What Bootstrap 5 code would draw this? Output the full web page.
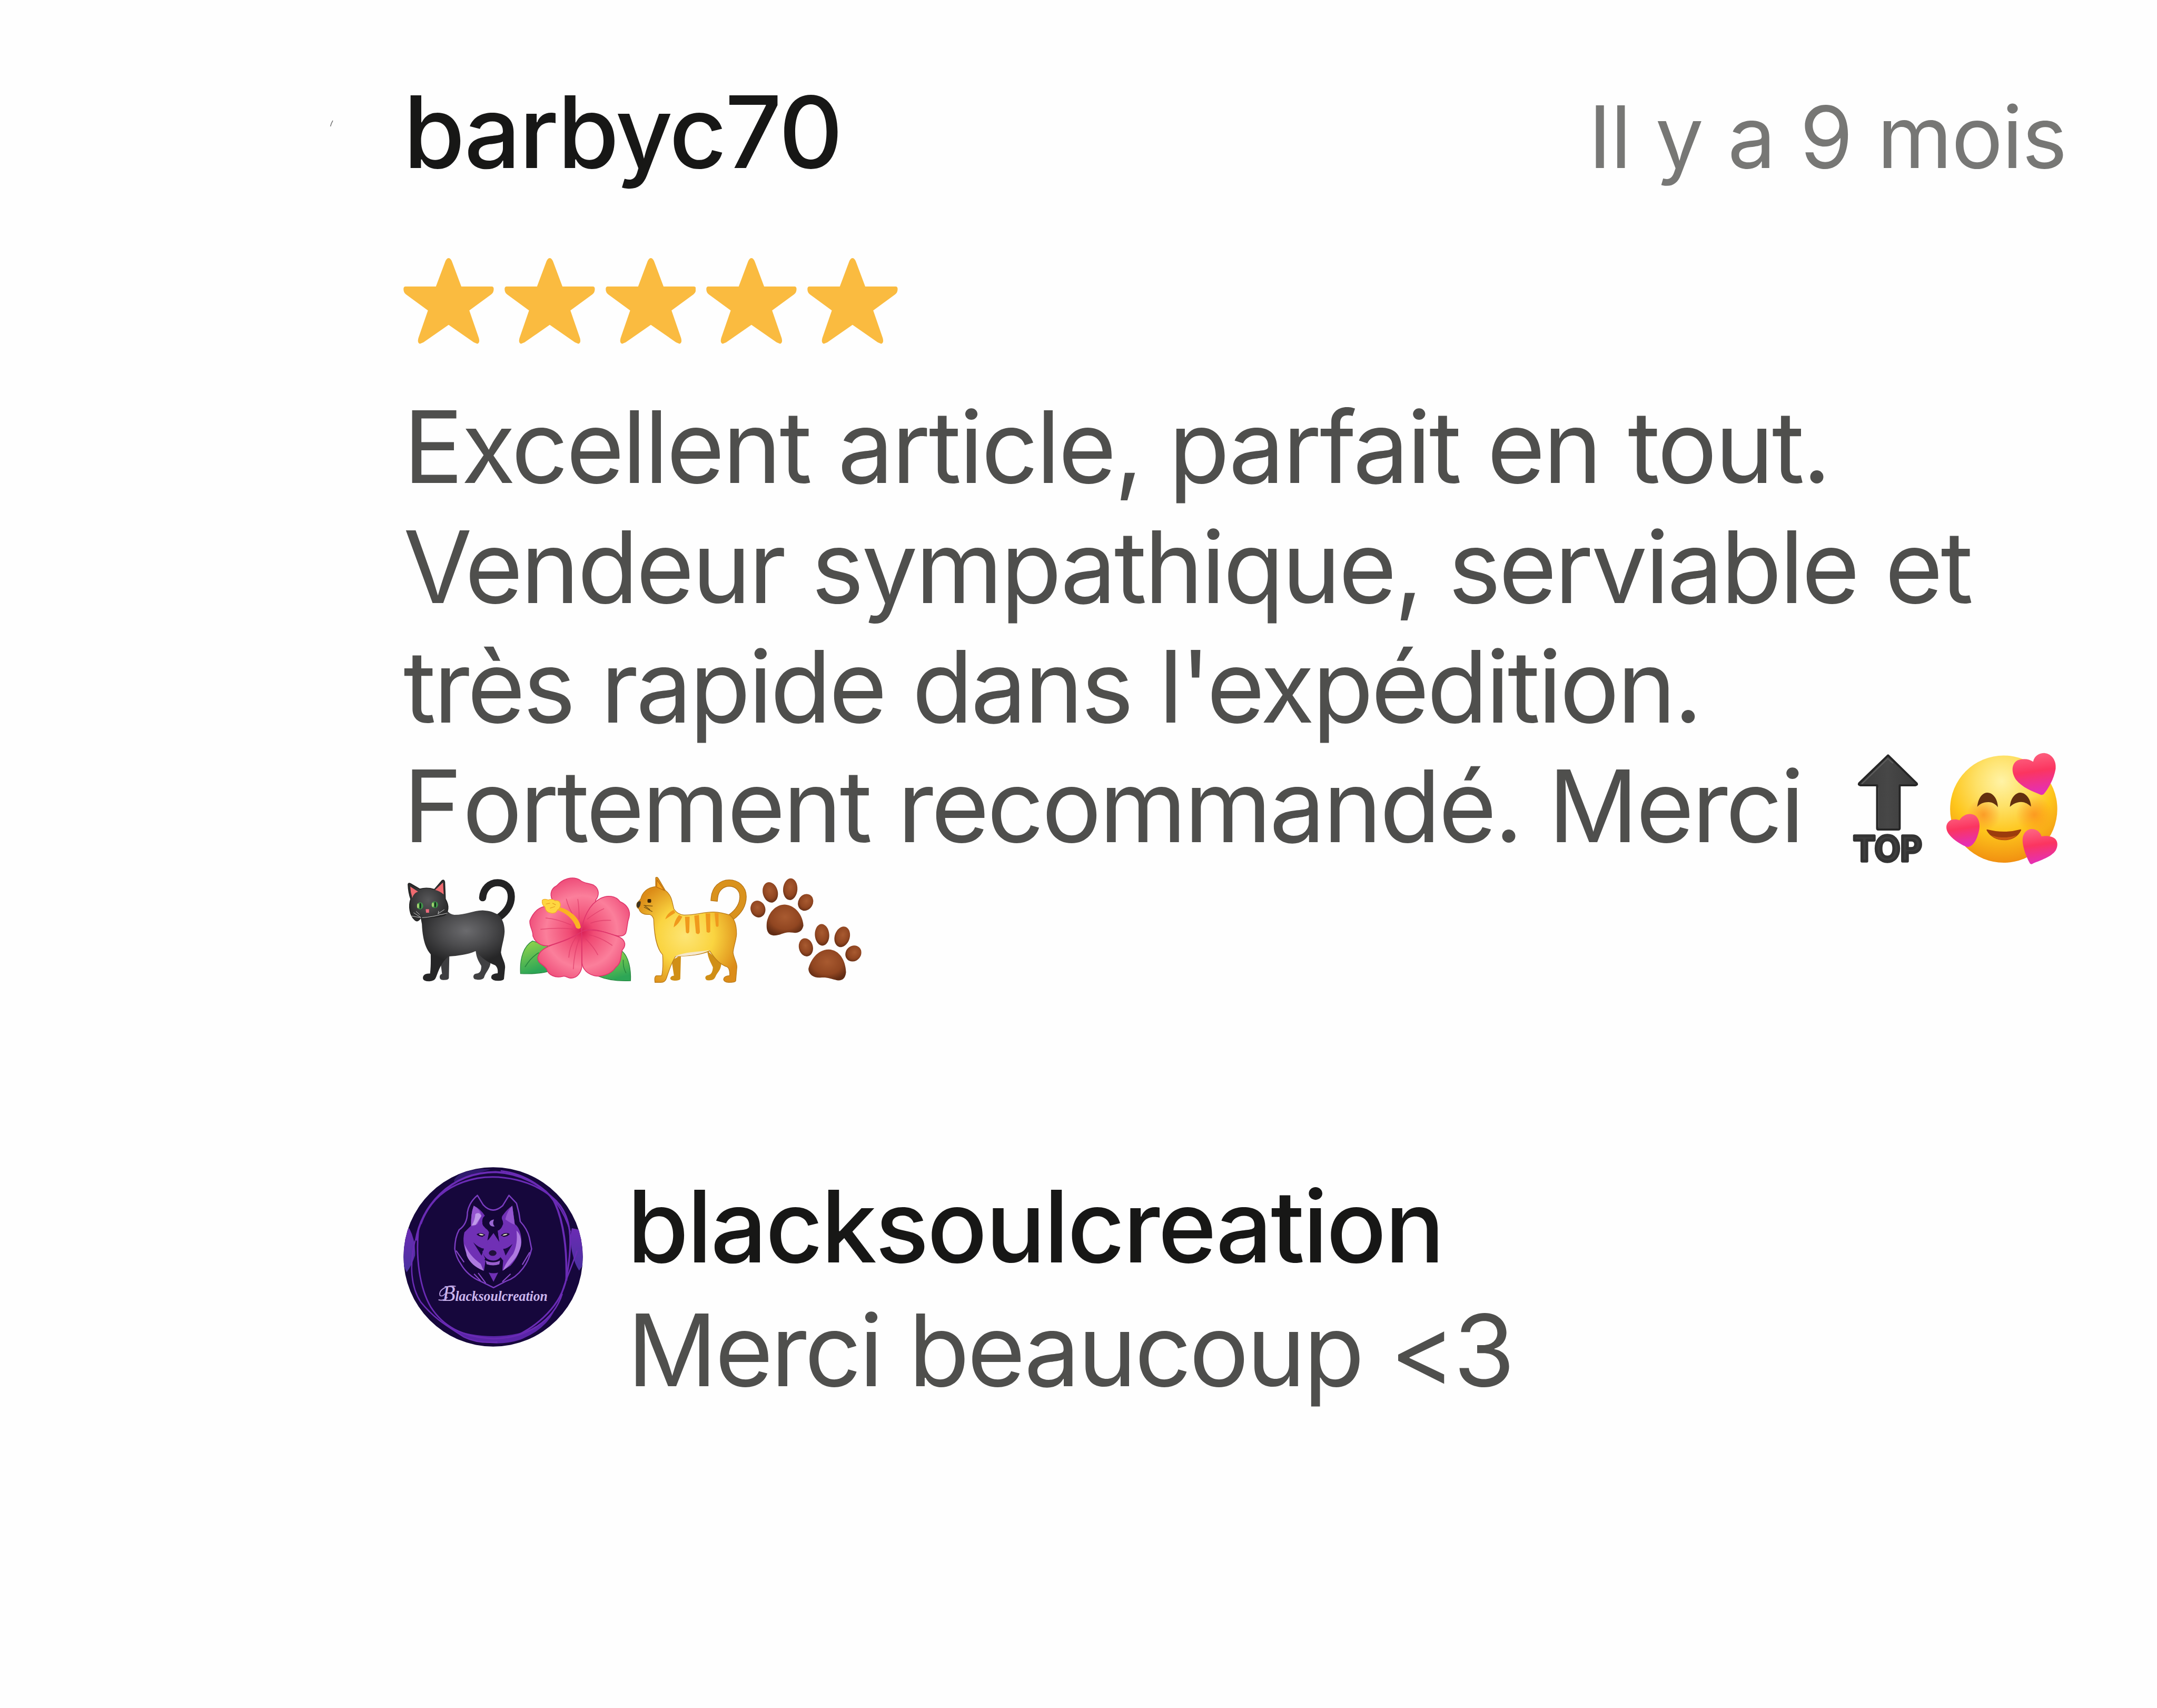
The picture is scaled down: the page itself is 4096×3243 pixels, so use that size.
<!DOCTYPE html>
<html lang="fr">
<head>
  <meta charset="UTF-8" />
  <meta name="viewport" content="width=device-width, initial-scale=1.0" />
  <title>Avis</title>
  <link href="https://cdn.jsdelivr.net/npm/bootstrap@5.3.0/dist/css/bootstrap.min.css" rel="stylesheet" />
  <style>
    body {
      background-color: #fefefe;
      font-family: Inter, "Liberation Sans", sans-serif;
      font-size: 189.2px;
      line-height: 227.4px;
      color: #4f4f4d;
      letter-spacing: -.0222em;
      word-spacing: 3px;
    }
    .review { padding: 137px 172px 0 766px; }
    .user-name { color: #171716; font-weight: 500; letter-spacing: -.017em; }
    .review-date { color: #777775; font-size: 163px; letter-spacing: -.010em; }
    .stars { gap: 20px; margin-top: 117px; margin-bottom: 82px; }
    .stars svg { width: 171.8px; height: 162.8px; }
    .track-open { letter-spacing: -.0202em; }
    .track-tight { letter-spacing: -.0228em; }
    .cap-open { letter-spacing: .003em; }
    .emoji { width: 218.1px; height: 227.4px; flex: none; overflow: visible; }
    .after-text { margin-left: 53px; }
    .emoji-line { padding-left: 1px; }
    .reply { margin-top: 340px; line-height: 234.9px; gap: 84px; }
    .avatar { width: 341px; height: 341px; margin-top: 4px; flex: none; }
    .speck { left: 626px; top: 228px; width: 7px; height: 13px; }
  </style>
</head>
<body>

<svg class="position-absolute speck" viewBox="0 0 7 13"><path d="M1.500 12Q3 6 6 1" stroke="#777" stroke-width="1.500" fill="none" /></svg>

<div class="review">
  <div class="d-flex justify-content-between align-items-baseline">
    <div class="user-name">barbyc70</div>
    <div class="review-date">Il y a 9 mois</div>
  </div>

  <!-- Rating -->
  <div class="d-flex stars" id="stars"></div>

  <!-- Comment -->
  <div class="text-nowrap">
    <div class="track-open">Excellent article, parfait en tout.</div>
    <div>Vendeur sympathique, serviable et</div>
    <div class="track-tight">très rapide dans l'expédition.</div>
    <div class="d-flex">
      <span><span class="cap-open">F</span>ortement recommandé. Merci</span>
      <svg class="emoji after-text" viewBox="-77 14 690 719">
        <defs>
          <linearGradient id="topFill" x1="0" y1="0" x2="1" y2="0">
            <stop offset="0" stop-color="#3c3c3c" /><stop offset=".5" stop-color="#474747" /><stop offset="1" stop-color="#3a3a3a" />
          </linearGradient>
        </defs>
        <path d="M272 68L444 236Q450 246 436 248H342V506Q342 514 334 514H212Q206 514 206 506V248H106Q92 246 98 236Z" fill="url(#topFill)" stroke="#262626" stroke-width="12" stroke-linejoin="round" />
        <path d="M116 238L270 88L300 114" fill="none" stroke="#5d5d5d" stroke-width="7" stroke-linecap="round" />
        <path d="M215 262V498" stroke="#555" stroke-width="4" />
        <text x="62" y="703" textLength="414" lengthAdjust="spacingAndGlyphs" font-family="Inter" font-weight="700" font-size="210" letter-spacing="0" fill="#3d3d3d" stroke="#333" stroke-width="17" stroke-linejoin="round">TOP</text>
      </svg>
      <svg class="emoji" viewBox="612 14 690 719">
        <defs>
          <radialGradient id="faceFill" cx=".48" cy=".24" r=".78">
            <stop offset="0" stop-color="#fff3a6" /><stop offset=".3" stop-color="#fee168" /><stop offset=".62" stop-color="#fec61c" /><stop offset="1" stop-color="#f08c10" />
          </radialGradient>
          <radialGradient id="blush"><stop offset="0" stop-color="#fb8a1e" stop-opacity=".75" /><stop offset="1" stop-color="#fb8a1e" stop-opacity="0" /></radialGradient>
          <linearGradient id="heartFill" x1="0" y1="0" x2=".15" y2="1">
            <stop offset="0" stop-color="#fd6a85" /><stop offset=".5" stop-color="#fb3560" /><stop offset="1" stop-color="#e52fb4" />
          </linearGradient>
        </defs>
        <circle cx="966" cy="391" r="322" fill="url(#faceFill)" />
        <circle cx="845" cy="425" r="100" fill="url(#blush)" />
        <circle cx="1150" cy="425" r="110" fill="url(#blush)" />
        <path d="M807 378C812 322 840 292 868 292C902 292 930 330 931 380C916 360 896 348 872 349C846 349 824 358 807 378Z" fill="#63300f" />
        <path d="M1003 378C1006 326 1036 292 1066 292C1098 292 1128 328 1130 376C1110 358 1092 348 1070 348C1044 348 1022 360 1003 378Z" fill="#63300f" />
        <path d="M866 513Q968 540 1067 513C1070 513 1072 516 1070 520C1050 560 1010 578 970 578C925 578 885 558 864 520Q862 513 866 513Z" fill="#9c3c0c" />
        <path d="M890 548C930 586 1010 586 1044 548C1000 566 930 566 890 548Z" fill="#c95a12" />
        <path d="M1143 106C1150 70 1180 54 1210 54C1255 58 1284 100 1278 150C1268 210 1235 268 1206 302Q1198 308 1186 304C1140 286 1075 260 1040 215C1010 170 1012 118 1050 98C1085 84 1118 90 1143 106Z" fill="url(#heartFill)" />
        <path d="M700 458C722 422 768 408 800 434C832 470 822 520 806 560C794 590 780 605 765 614Q752 622 738 616C700 600 650 565 632 535C612 500 622 470 650 456C670 450 686 452 700 458Z" fill="url(#heartFill)" />
        <path d="M1193 555C1185 525 1155 506 1122 512C1085 524 1074 560 1082 605C1090 650 1108 690 1124 718Q1132 726 1142 718C1190 696 1250 680 1278 640C1300 600 1286 565 1250 556C1225 550 1208 552 1193 555Z" fill="url(#heartFill)" />
      </svg>
    </div>
    <div class="d-flex emoji-line">
      <!-- black cat -->
      <svg class="emoji" viewBox="27 -16 690 719">
        <defs>
          <radialGradient id="furDark" gradientUnits="userSpaceOnUse" cx="400" cy="370" r="300" gradientTransform="translate(0 130) scale(1 .65)">
            <stop offset="0" stop-color="#6b6b6e" /><stop offset=".5" stop-color="#4b4b4d" /><stop offset="1" stop-color="#262627" />
          </radialGradient>
          <radialGradient id="headDark"><stop offset="0" stop-color="#58585a" /><stop offset="1" stop-color="#2d2d2e" /></radialGradient>
        </defs>
        <path d="M300 515L297 655Q294 667 262 666Q240 666 242 645Q244 632 256 630L246 550Z" fill="#3d3d3f" />
        <path d="M458 485C462 540 482 560 492 582C492 610 484 624 468 627C442 628 440 650 450 660C470 668 500 666 508 652C516 620 545 600 548 560Z" fill="#414143" />
        <path d="M600 288C650 252 672 210 672 165C672 112 634 82 590 82C542 82 504 118 500 172" fill="none" stroke="#222223" stroke-width="43" stroke-linecap="round" />
        <path d="M125 280C150 270 270 240 292 256Q305 272 330 275C400 275 440 250 500 248C545 250 570 262 590 272C625 300 632 345 632 375C630 420 615 455 610 500C615 535 636 560 635 590L628 660Q624 671 596 671Q560 672 552 655C550 636 562 628 590 626C594 600 584 585 575 578C530 560 490 530 458 492C410 515 350 520 296 525C250 560 236 610 220 650Q212 674 180 674Q142 674 141 655C142 632 160 628 184 628C190 580 188 540 188 512C150 470 138 400 135 330Z" fill="url(#furDark)" />
        <path d="M52 92Q54 80 68 88L122 120Q165 108 210 122L256 69Q268 60 272 78L276 180C300 220 296 260 270 278C220 295 160 290 128 292Q112 320 95 308C60 280 54 220 68 180Q54 140 52 92Z" fill="url(#headDark)" stroke="#222" stroke-width="5" />
        <path d="M65 105L112 136Q84 145 78 174Q66 140 65 105Z" fill="#ef6b70" /><path d="M262 80L266 152Q240 130 215 125Z" fill="#ef6b70" />
        <ellipse cx="124" cy="221" rx="19" ry="21" fill="#3f9648" /><ellipse cx="112" cy="221" rx="6" ry="14" fill="#a8d672" /><ellipse cx="126" cy="221" rx="5" ry="17" fill="#142b1b" />
        <ellipse cx="212" cy="214" rx="20" ry="20" fill="#3f9648" /><ellipse cx="201" cy="215" rx="6" ry="13" fill="#a8d672" /><ellipse cx="215" cy="214" rx="5" ry="17" fill="#142b1b" />
        <path d="M158 241H178V262H160Z" fill="#ee6a7c" />
        <path d="M85 262L128 290M100 254L122 274M72 282L130 292M136 292Q200 288 250 272M232 268L270 243M236 252L232 270M250 274L288 264" fill="none" stroke="#d5d5d5" stroke-width="3" />
      </svg>
      <!-- hibiscus -->
      <svg class="emoji" viewBox="717 -16 690 719">
        <defs>
          <radialGradient id="petal" gradientUnits="userSpaceOnUse" cx="1095" cy="375" r="330">
            <stop offset="0" stop-color="#d91f55" /><stop offset=".22" stop-color="#f04b74" /><stop offset=".65" stop-color="#fb7f9b" /><stop offset="1" stop-color="#ee4b78" />
          </radialGradient>
          <linearGradient id="leaf" x1="0" y1="0" x2=".3" y2="1"><stop offset="0" stop-color="#9bd84c" /><stop offset="1" stop-color="#2da656" /></linearGradient>
        </defs>
        <path d="M800 432C750 460 722 530 728 628Q830 632 890 616L890 460Z" fill="url(#leaf)" stroke="#27873f" stroke-width="4" />
        <path d="M755 588Q790 530 838 502" fill="none" stroke="#27873f" stroke-width="5" />
        <path d="M1340 495C1378 530 1392 600 1389 671Q1270 676 1195 643L1250 560Z" fill="url(#leaf)" stroke="#27873f" stroke-width="4" />
        <path d="M1345 545Q1342 590 1362 625" fill="none" stroke="#27873f" stroke-width="5" />
        <g fill="url(#petal)" stroke="#df356b" stroke-width="5" stroke-linejoin="round">
          <path d="M1095 375C1030 330 960 260 930 200C900 165 905 120 945 100C980 60 1040 38 1085 66C1110 88 1135 82 1165 95C1205 120 1200 160 1180 185C1180 240 1110 290 1095 375Z" />
          <path d="M1095 375C1100 300 1140 210 1210 175C1250 155 1300 160 1325 195C1370 215 1390 250 1380 290C1365 330 1372 350 1360 385C1340 415 1300 400 1270 390C1210 370 1150 350 1095 375Z" />
          <path d="M1095 375C1170 350 1270 390 1325 410C1360 430 1362 460 1340 485C1325 520 1340 560 1300 590C1270 635 1210 650 1170 640C1110 625 1098 580 1097 560Z" />
          <path d="M1095 375L1096 590C1090 620 1070 655 1030 655C1010 655 1000 638 980 645C940 655 895 640 885 600C860 565 830 570 832 530C840 490 880 470 920 455C980 435 1040 415 1095 375Z" />
          <path d="M1095 375C1050 410 960 440 900 460C860 465 815 445 802 400C805 370 780 345 784 310C800 270 825 235 870 225C930 220 1010 240 1050 290C1080 320 1095 350 1095 375Z" />
        </g>
        <path d="M1080 300Q1080 230 1072 182M1048 285Q1015 230 1003 180M1130 300Q1180 260 1228 238M1150 325Q1200 305 1270 308M1030 335Q950 300 880 294M1040 360Q950 350 850 362M1060 410Q1020 470 1018 530M1120 420Q1170 470 1192 515M1140 395Q1210 410 1278 458M1080 420Q1050 500 1045 600" fill="none" stroke="#dd3a68" stroke-width="5" stroke-linecap="round" opacity=".7" />
        <path d="M960 228C1030 245 1085 300 1090 350Q1080 366 1062 352C1045 300 1000 262 945 245Z" fill="#fbb322" />
        <path d="M858 188Q870 175 895 186Q920 176 935 190Q965 185 968 215Q965 240 950 245Q940 270 912 264Q880 262 875 228Q855 215 858 188Z" fill="#fed640" stroke="#f3b02b" stroke-width="4" />
        <path d="M880 210L905 205M905 235L935 225M920 205L940 215" stroke="#e59e22" stroke-width="4" />
      </svg>
      <!-- tabby cat -->
      <svg class="emoji" viewBox="27 -16 690 719">
        <defs>
          <radialGradient id="furGold" gradientUnits="userSpaceOnUse" cx="340" cy="400" r="340">
            <stop offset="0" stop-color="#fde576" /><stop offset=".5" stop-color="#fad440" /><stop offset="1" stop-color="#dc8c18" />
          </radialGradient>
        </defs>
        <path d="M312 515L308 660Q304 670 275 670Q246 668 248 655Q250 642 270 640L256 550Z" fill="#d08f16" />
        <path d="M470 490C474 540 494 565 504 590C502 618 494 634 476 637C452 640 456 662 468 668C500 670 512 664 520 645C530 620 552 610 555 565Z" fill="#d08f16" />
        <path d="M612 290C662 254 685 210 685 165C685 114 645 84 602 84C555 84 518 120 513 172" fill="none" stroke="#b06d12" stroke-width="43" stroke-linecap="square" />
        <path d="M612 290C662 254 685 210 685 165C685 114 645 84 602 84C555 84 518 120 513 172" fill="none" stroke="#d9921d" stroke-width="36" stroke-linecap="square" />
        <path d="M160 105L160 52Q168 44 176 56L218 128C260 160 258 200 270 240Q290 272 330 276C400 278 450 256 510 258C555 260 580 268 605 276C638 300 646 345 646 390C644 430 630 455 625 500C628 535 650 560 648 590L641 672Q636 681 600 681Q570 680 568 662C570 645 585 641 605 640C606 610 600 595 590 588C550 575 520 545 485 492C420 520 340 522 280 524C255 560 240 610 225 655Q218 681 190 681H156Q150 645 165 641H196C206 600 204 550 202 515C165 475 152 400 148 300Q140 275 120 272C90 276 65 262 60 240Q40 230 48 205L70 180C80 140 110 110 160 105Z" fill="url(#furGold)" stroke="#b97a1a" stroke-width="4" />
        <path d="M168 66L212 128L166 108Z" fill="#f5a31c" stroke="#b76a10" stroke-width="4" />
        <path d="M275 524C340 495 410 500 485 486Q420 522 275 524Z" fill="#f4e7cf" />
        <path d="M268 245L278 262Q250 280 218 302Q225 268 268 245ZM300 276L320 286Q300 330 268 350Q272 310 300 276ZM336 286H364L362 378Q354 394 342 380ZM392 280L420 276L426 380Q418 398 402 384ZM460 266H488V376Q480 388 466 378ZM514 264H538V342Q530 352 522 342Z" fill="#f0991c" />
        <rect x="111" y="180" width="22" height="22" rx="6" fill="#3a2308" />
        <path d="M48 205Q55 190 70 194Q72 220 56 234Q42 226 48 205Z" fill="#3e3320" />
        <path d="M88 218L142 222M90 228L140 256M96 222L126 244" fill="none" stroke="#6d4a10" stroke-width="4" />
      </svg>
      <!-- paw prints -->
      <svg class="emoji" viewBox="717 -16 690 719">
        <defs>
          <radialGradient id="pad" cx=".5" cy=".4" r=".62"><stop offset="0" stop-color="#a85a30" /><stop offset=".65" stop-color="#914621" /><stop offset="1" stop-color="#612c14" /></radialGradient>
        </defs>
        <g fill="url(#pad)">
          <ellipse cx="775" cy="240" rx="44" ry="51" transform="rotate(-20 775 240)" />
          <ellipse cx="849" cy="140" rx="45" ry="62" transform="rotate(-14 849 140)" />
          <ellipse cx="969" cy="121" rx="43" ry="65" transform="rotate(4 969 121)" />
          <ellipse cx="1061" cy="200" rx="44" ry="52" transform="rotate(30 1061 200)" />
          <path d="M936 213C1000 216 1046 280 1048 340C1040 380 1010 386 985 382C930 372 915 400 868 399C830 395 824 360 828 320C840 260 880 214 936 213Z" />
          <ellipse cx="1063" cy="470" rx="42" ry="55" transform="rotate(-14 1063 470)" />
          <ellipse cx="1160" cy="395" rx="43" ry="65" transform="rotate(-4 1160 395)" />
          <ellipse cx="1281" cy="407" rx="45" ry="63" transform="rotate(18 1281 407)" />
          <ellipse cx="1348" cy="507" rx="45" ry="51" transform="rotate(45 1348 507)" />
          <path d="M1200 483C1265 485 1302 550 1304 620C1300 660 1280 672 1250 668C1210 658 1190 648 1150 652C1110 654 1080 635 1078 600C1090 550 1130 484 1200 483Z" />
        </g>
      </svg>
    </div>
  </div>

  <!-- Seller reply -->
  <div class="d-flex reply text-nowrap">
    <svg class="avatar" viewBox="55 58 1080 1080">
      <defs>
        <clipPath id="round"><circle cx="595" cy="598" r="539" /></clipPath>
        <linearGradient id="side" x1="0" y1="0" x2="0" y2="1"><stop offset="0" stop-color="#6b2bb4" /><stop offset="1" stop-color="#4a32a0" /></linearGradient>
      </defs>
      <g clip-path="url(#round)">
        <rect x="55" y="58" width="1080" height="1080" fill="#16073c" />
        <path d="M90 425Q130 500 125 590Q105 650 75 690L50 640V440ZM1068 425Q1050 500 1075 590Q1085 640 1112 680L1140 640V440Z" fill="url(#side)" />
        <path d="M400 95Q500 60 580 72Q500 90 380 150Q330 150 400 95Z" fill="#2f1a6e" />
        <path d="M340 1025Q450 1075 600 1075Q760 1070 850 1020Q900 990 960 930Q900 1040 760 1095Q640 1135 500 1105Q410 1085 340 1025Z" fill="#5a25a8" />
        <g fill="none" stroke="#6a2bb5">
          <path d="M160 400C210 260 320 160 500 125C650 100 830 140 945 235C1080 340 1070 520 1040 700C1020 860 900 990 740 1070" stroke-width="10" />
          <path d="M130 500C160 300 330 90 610 88C760 95 900 170 960 260C1020 380 1040 560 1035 740" stroke-width="12" />
          <path d="M145 440C130 600 150 780 220 900C290 1010 400 1080 600 1090C800 1085 960 980 1010 820" stroke-width="9" />
          <path d="M125 500C90 650 100 780 160 870C250 980 330 1020 420 1080Q500 1120 620 1110" stroke-width="8" />
          <path d="M640 80C820 100 1000 230 1060 450M1100 560C1060 680 1010 780 1000 850" stroke-width="8" />
        </g>
        <path d="M500 228L535 285Q590 345 652 290L690 228L735 275Q752 330 758 385Q800 430 812 480L826 550Q810 620 775 665Q730 725 670 745L597 783L520 745Q440 710 400 640Q372 600 364 550Q365 480 390 435Q440 400 440 330Q450 270 500 228Z" fill="#150638" stroke="#7a3cc0" stroke-width="8" stroke-linejoin="round" />
        <path d="M478 290Q520 310 545 350Q520 370 535 410Q560 430 570 450L560 500Q590 470 597 455Q610 480 630 505L622 440Q650 420 652 385Q640 360 655 345Q680 310 710 290L725 400Q765 430 765 510Q755 590 700 650L650 682L655 620Q640 600 640 600L660 560Q640 620 597 620Q550 620 530 570L550 615L540 680Q470 650 440 590Q405 520 422 450L462 410Q460 340 478 290Z" fill="#7030b5" />
        <path d="M478 290Q515 310 525 350L500 400Q475 418 462 410Q460 340 478 290ZM710 290L725 405Q700 395 668 372Q680 320 710 290Z" fill="#9455cf" />
        <path d="M488 340Q510 325 524 352L490 405L466 408Q485 380 488 340Z" fill="#c09aea" />
        <path d="M422 520Q450 590 520 640L538 682Q460 650 436 590ZM735 440Q768 470 762 530Q745 610 655 680Q665 640 715 580Q745 520 735 440Z" fill="#ae7ae0" />
        <path d="M475 510Q510 545 540 548L525 590ZM712 520Q680 550 655 550L670 590Z" fill="#1a0842" />
        <path d="M530 400Q530 350 595 350Q655 350 655 400Q640 440 620 440L632 510L597 455L565 510L572 440Q545 430 530 400Z" fill="#150638" />
        <path d="M563 500L597 455L630 505L640 570Q597 540 548 570Z" fill="#7030b5" />
        <path d="M600 372Q570 378 572 398Q580 420 604 414Q588 402 600 372Z" fill="#9a68d2" />
        <path d="M495 462Q520 445 548 466L530 478Q505 474 495 462ZM695 460Q670 445 640 468L660 478Q684 474 695 460Z" fill="#1a0a34" />
        <path d="M508 460Q525 456 540 466Q520 474 508 460ZM682 460Q665 456 650 468Q670 474 682 460Z" fill="#d9d9c0" />
        <path d="M530 565Q560 545 597 548Q640 548 662 565Q650 610 597 614Q545 610 530 565Z" fill="#7030b5" />
        <ellipse cx="592" cy="575" rx="23" ry="17" fill="#21103c" />
        <path d="M548 612Q595 635 638 612L632 642Q595 655 556 642Z" fill="#9a5fce" /><path d="M545 612Q595 640 640 612" fill="none" stroke="#150638" stroke-width="9" />
        <path d="M568 692Q597 700 625 692L597 748Z" fill="#7030b5" />
        <path d="M480 700L520 742M505 695L550 755M700 700L650 748M372 560L420 630M815 570L770 645" stroke="#8548c4" stroke-width="7" />
        <text x="290" y="862" textLength="632" lengthAdjust="spacingAndGlyphs" font-family="Liberation Serif" font-style="italic" font-weight="700" font-size="88" letter-spacing="0" fill="#cbb6ee"><tspan font-size="136" font-weight="400">B</tspan>lacksoulcreation</text>
        <path d="M370 775C310 765 265 800 275 830Q290 840 310 815M320 840Q300 865 266 856" fill="none" stroke="#b9a0e0" stroke-width="6" />
      </g>
    </svg>
    <div>
      <div class="user-name">blacksoulcreation</div>
      <div>Merci beaucoup &lt;3</div>
    </div>
  </div>
</div>

<script>
  // Five filled stars
  const star = '<svg viewBox="0 0 181 172"><path d="M90.500 0Q95 0 98 9L116 57H177Q181 57 181 62Q181 69 176 73L132 105L151 160Q154 170 148 172L141 169L90.500 134L40 169L33 172Q27 170 30 160L49 105L5 73Q0 69 0 62Q0 57 4 57H65L83 9Q86 0 90.500 0Z" fill="#fabb40" /></svg>';
  document.getElementById('stars').innerHTML = star.repeat(5);
</script>
<script src="https://cdn.jsdelivr.net/npm/bootstrap@5.3.0/dist/js/bootstrap.bundle.min.js"></script>
</body>
</html>
